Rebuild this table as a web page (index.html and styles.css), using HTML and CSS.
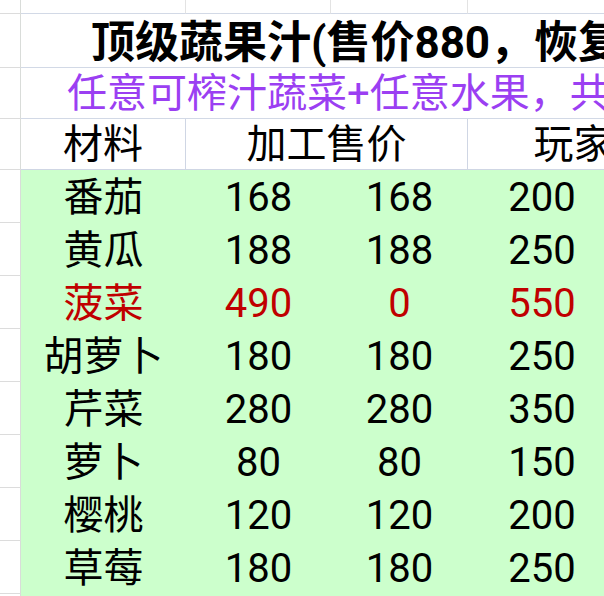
FILE: index.html
```html
<!DOCTYPE html>
<html lang="zh-CN">
<head>
<meta charset="utf-8">
<title>顶级蔬果汁</title>
<link rel="stylesheet" href="styles.css">
</head>
<body>
<div class="sheet">
  <!-- row 1 -->
  <div class="rh"></div>
  <div class="c top"></div>
  <div class="c top"></div>
  <div class="c top"></div>
  <div class="c top"></div>
  <div class="c top"></div>
  <!-- title -->
  <div class="rh"></div>
  <div class="c title span5"><span>顶级蔬果汁(售价880，恢复体力</span></div>
  <!-- subtitle -->
  <div class="rh"></div>
  <div class="c sub span5"><span>任意可榨汁蔬菜+任意水果，共同制作</span></div>
  <!-- header -->
  <div class="rh"></div>
  <div class="c hd center">材料</div>
  <div class="c hd center span2">加工售价</div>
  <div class="c hd center span2">玩家售价</div>

  <div class="rh"></div><div class="c d">番茄</div><div class="c d">168</div><div class="c d">168</div><div class="c d">200</div><div class="c d"></div>
  <div class="rh"></div><div class="c d">黄瓜</div><div class="c d">188</div><div class="c d">188</div><div class="c d">250</div><div class="c d"></div>
  <div class="rh"></div><div class="c d red">菠菜</div><div class="c d red">490</div><div class="c d red">0</div><div class="c d red">550</div><div class="c d"></div>
  <div class="rh"></div><div class="c d">胡萝卜</div><div class="c d">180</div><div class="c d">180</div><div class="c d">250</div><div class="c d"></div>
  <div class="rh"></div><div class="c d">芹菜</div><div class="c d">280</div><div class="c d">280</div><div class="c d">350</div><div class="c d"></div>
  <div class="rh"></div><div class="c d">萝卜</div><div class="c d">80</div><div class="c d">80</div><div class="c d">150</div><div class="c d"></div>
  <div class="rh"></div><div class="c d">樱桃</div><div class="c d">120</div><div class="c d">120</div><div class="c d">200</div><div class="c d"></div>
  <div class="rh"></div><div class="c d">草莓</div><div class="c d">180</div><div class="c d">180</div><div class="c d">250</div><div class="c d"></div>
  <div class="rh"></div><div class="c d"></div><div class="c d"></div><div class="c d"></div><div class="c d"></div><div class="c d"></div>
</div>
</body>
</html>
```
FILE: styles.css
```css
html, body {
  margin: 0;
  padding: 0;
  background: #ffffff;
  overflow: hidden;
}
body {
  width: 604px;
  height: 596px;
  font-family: Roboto, "Noto Sans CJK SC", sans-serif;
  color: #000;
}
.sheet {
  display: grid;
  grid-template-columns: 21px 165px 145px 137px 148px 144px;
  grid-template-rows: 14px 54px 51px 51px repeat(8, 53px) 20px;
  width: 660px;
}
.rh {
  box-sizing: border-box;
  border-right: 1px solid #d9dcd9;
  border-bottom: 1px solid #dcdcdc;
  background: #fff;
}
.c {
  box-sizing: border-box;
  display: flex;
  align-items: center;
  white-space: nowrap;
  overflow: hidden;
  line-height: 1;
}
.top {
  border-right: 1px solid #e3e3e3;
  border-bottom: 1px solid #d2d9e6;
}
.span5 { grid-column: span 5; }
.span2 { grid-column: span 2; }
.title {
  font-size: 44px;
  font-weight: bold;
  padding-left: 70px;
  padding-top: 4px;
  border-bottom: 1px solid #d2d9e6;
}
.sub {
  font-size: 40px;
  color: #9b3ff2;
  padding-left: 46px;
  padding-top: 2px;
  border-bottom: 1px solid #d2d9e6;
}
.hd {
  font-size: 40px;
  border-right: 1px solid #cfd6e4;
  border-bottom: 1px solid #cfd6e4;
  padding-top: 2px;
}
.center { justify-content: center; }
.d {
  font-size: 40px;
  justify-content: center;
  background: #ccffcc;
  padding-top: 2px;
}
.red { color: #c00000; }
```
